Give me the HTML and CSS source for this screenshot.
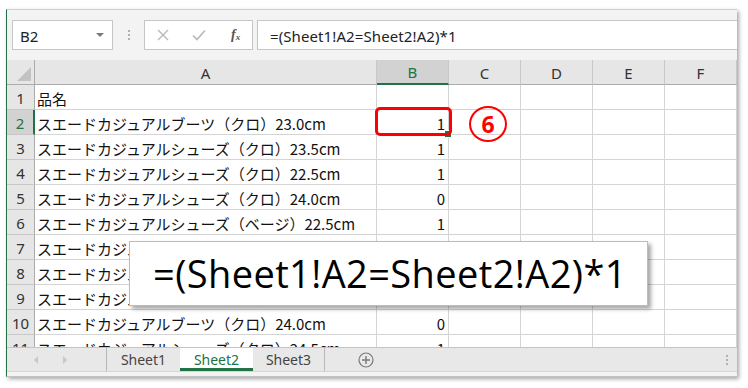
FILE: index.html
```html
<!DOCTYPE html>
<html lang="ja">
<head>
<meta charset="utf-8">
<title>Excel</title>
<link rel="stylesheet" href="styles.css">
</head>
<body>
<div class="window">
  <div class="fbar">
    <div class="namebox"><span>B2</span><span class="dd"></span></div>
    <div class="vdots"><i></i><i></i><i></i></div>
    <div class="btns">
      <svg class="ic" width="14" height="14" viewBox="0 0 14 14"><path d="M2 2L12 12M12 2L2 12" stroke="#b8b8b8" stroke-width="1.4" fill="none"/></svg>
      <svg class="ic" width="16" height="14" viewBox="0 0 16 14"><path d="M2 7.5L6 11.5L14 2.5" stroke="#b8b8b8" stroke-width="1.6" fill="none"/></svg>
      <span class="fx">f<sub>x</sub></span>
    </div>
    <div class="formula">=(Sheet1!A2=Sheet2!A2)*1</div>
  </div>
  <div class="gridwrap">
    <div class="grid">
      <div class="hd corner"><span class="tri"></span></div>
      <div class="hd">A</div>
      <div class="hd sel-col">B</div>
      <div class="hd">C</div>
      <div class="hd">D</div>
      <div class="hd">E</div>
      <div class="hd">F</div>

      <div class="rn">1</div><div class="c t">品名</div><div class="c n"></div><div class="c"></div><div class="c"></div><div class="c"></div><div class="c"></div>
      <div class="rn sel-row">2</div><div class="c t">スエードカジュアルブーツ（クロ）23.0cm</div><div class="c n active">1<span class="handle"></span></div><div class="c"></div><div class="c"></div><div class="c"></div><div class="c"></div>
      <div class="rn">3</div><div class="c t">スエードカジュアルシューズ（クロ）23.5cm</div><div class="c n">1</div><div class="c"></div><div class="c"></div><div class="c"></div><div class="c"></div>
      <div class="rn">4</div><div class="c t">スエードカジュアルシューズ（クロ）22.5cm</div><div class="c n">1</div><div class="c"></div><div class="c"></div><div class="c"></div><div class="c"></div>
      <div class="rn">5</div><div class="c t">スエードカジュアルシューズ（クロ）24.0cm</div><div class="c n">0</div><div class="c"></div><div class="c"></div><div class="c"></div><div class="c"></div>
      <div class="rn">6</div><div class="c t">スエードカジュアルシューズ（ベージ）22.5cm</div><div class="c n">1</div><div class="c"></div><div class="c"></div><div class="c"></div><div class="c"></div>
      <div class="rn">7</div><div class="c t">スエードカジュアルシューズ（ベージ）23.0cm</div><div class="c n">1</div><div class="c"></div><div class="c"></div><div class="c"></div><div class="c"></div>
      <div class="rn">8</div><div class="c t">スエードカジュアルシューズ（ベージ）23.5cm</div><div class="c n">1</div><div class="c"></div><div class="c"></div><div class="c"></div><div class="c"></div>
      <div class="rn">9</div><div class="c t">スエードカジュアルブーツ（クロ）23.5cm</div><div class="c n">1</div><div class="c"></div><div class="c"></div><div class="c"></div><div class="c"></div>
      <div class="rn">10</div><div class="c t">スエードカジュアルブーツ（クロ）24.0cm</div><div class="c n">0</div><div class="c"></div><div class="c"></div><div class="c"></div><div class="c"></div>
      <div class="rn">11</div><div class="c t">スエードカジュアルシューズ（クロ）24.5cm</div><div class="c n">1</div><div class="c"></div><div class="c"></div><div class="c"></div><div class="c"></div>
    </div>
  </div>
  <div class="tabs">
    <div class="nav">
      <svg width="8" height="10" viewBox="0 0 8 10"><path d="M6 1L2 5L6 9Z" fill="#c8c8c8"/></svg>
      <svg width="8" height="10" viewBox="0 0 8 10"><path d="M2 1L6 5L2 9Z" fill="#c8c8c8"/></svg>
    </div>
    <div class="tab">Sheet1</div>
    <div class="tab on">Sheet2</div>
    <div class="tab last">Sheet3</div>
    <div class="add">
      <svg width="16" height="16" viewBox="0 0 16 16"><circle cx="8" cy="8" r="7" stroke="#7a7a7a" stroke-width="1.2" fill="none"/><path d="M8 4V12M4 8H12" stroke="#7a7a7a" stroke-width="1.4"/></svg>
    </div>
    <div class="spacer"></div>
    <div class="rdots"><i></i><i></i><i></i></div>
  </div>
  <div class="strip"></div>
</div>

<div class="redbox"></div>
<div class="badge">6</div>
<div class="tip">=(Sheet1!A2=Sheet2!A2)*1</div>
</body>
</html>
```
FILE: styles.css
```css
html, body {
  margin: 0;
  padding: 0;
  background: #ffffff;
}
body {
  position: relative;
  width: 748px;
  height: 388px;
  overflow: hidden;
  font-family: "Noto Sans CJK JP", "Noto Sans", sans-serif;
}
.window {
  position: absolute;
  left: 6px;
  top: 9px;
  width: 731px;
  height: 368px;
  box-sizing: border-box;
  border-left: 1px solid #217346;
  border-top: 1px solid #d0d0d0;
  border-bottom: 1px solid #c4c4c4;
  background: #f3f3f3;
  box-shadow: 2px 2px 4px rgba(0, 0, 0, 0.35);
  display: flex;
  flex-direction: column;
}
.fbar {
  height: 50px;
  box-sizing: border-box;
  padding: 10px 0 10px 5px;
  display: flex;
  align-items: stretch;
  background: #f3f3f3;
}
.namebox {
  width: 101px;
  box-sizing: border-box;
  border: 1px solid #c6c6c6;
  background: #fff;
  display: flex;
  align-items: center;
  justify-content: space-between;
  padding: 2px 8px 0 7px;
  font-family: "Noto Sans", sans-serif;
  font-size: 15px;
  color: #222;
}
.dd {
  width: 0;
  height: 0;
  border-left: 4px solid transparent;
  border-right: 4px solid transparent;
  border-top: 4px solid #7a7a7a;
  margin-bottom: 2px;
}
.vdots {
  width: 31px;
  display: flex;
  flex-direction: column;
  align-items: center;
  justify-content: center;
  gap: 2px;
}
.vdots i, .rdots i {
  display: block;
  width: 2px;
  height: 2px;
  background: #b0b0b0;
}
.btns {
  width: 109px;
  box-sizing: border-box;
  border: 1px solid #c6c6c6;
  background: #fff;
  display: flex;
  align-items: center;
  padding: 0 0 0 11px;
  gap: 21px;
}
.fx {
  font-family: "Liberation Serif", serif;
  font-style: italic;
  font-size: 14px;
  color: #555;
  font-weight: bold;
  margin-left: 3px;
}
.fx sub {
  font-size: 9px;
  vertical-align: -1px;
}
.formula {
  flex: 1;
  margin-left: 4px;
  border: 1px solid #c6c6c6;
  border-right: none;
  background: #fff;
  display: flex;
  align-items: center;
  padding-left: 12px;
  padding-top: 1px;
  font-family: "Noto Sans", sans-serif;
  font-size: 15px;
  letter-spacing: 0.1px;
  color: #222;
}
.gridwrap {
  height: 287px;
  overflow: hidden;
  background: #fff;
}
.grid {
  display: grid;
  grid-template-columns: 28px 342px repeat(5, 72px);
  grid-auto-rows: 25px;
}
.grid > div {
  box-sizing: border-box;
  border-right: 1px solid #d4d4d4;
  border-bottom: 1px solid #d4d4d4;
  display: flex;
  align-items: center;
  white-space: nowrap;
  overflow: hidden;
}
.hd {
  background: #e6e6e6;
  justify-content: center;
  font-family: "Noto Sans", sans-serif;
  font-size: 15px;
  color: #333;
  border-bottom-color: #ababab !important;
  border-right-color: #c8c8c8 !important;
  padding-top: 1px;
}
.corner {
  position: relative;
  border-right-color: #ababab !important;
}
.tri {
  position: absolute;
  right: 3px;
  bottom: 3px;
  width: 0;
  height: 0;
  border-left: 14px solid transparent;
  border-bottom: 14px solid #c2c2c2;
}
.sel-col {
  background: #d2d2d2;
  color: #217346;
  border-bottom: 2px solid #217346 !important;
}
.rn {
  background: #e6e6e6;
  justify-content: center;
  font-family: "Noto Sans", sans-serif;
  font-size: 15px;
  color: #333;
  border-right-color: #ababab !important;
  border-bottom-color: #c8c8c8 !important;
  padding-top: 1px;
}
.sel-row {
  background: #d2d2d2;
  color: #217346;
  border-right: 2px solid #217346 !important;
}
.c {
  font-size: 15px;
  color: #111;
}
.t {
  padding-left: 2px;
  padding-top: 2px;
}
.n {
  justify-content: flex-end;
  padding-right: 3px;
  padding-top: 2px;
}
.active {
  position: relative;
  overflow: visible !important;
}
.handle {
  position: absolute;
  right: -4px;
  bottom: -4px;
  width: 6px;
  height: 6px;
  background: #217346;
  border: 1px solid #fff;
}
.tabs {
  height: 24px;
  box-sizing: border-box;
  border-top: 1px solid #c4c4c4;
  background: #e8e8e8;
  display: flex;
  align-items: stretch;
  font-family: "Noto Sans", sans-serif;
  font-size: 14px;
  color: #444;
}
.nav {
  width: 100px;
  box-sizing: border-box;
  display: flex;
  align-items: center;
  padding-left: 25px;
  gap: 21px;
  border-right: 1px solid #b8b8b8;
}
.tab {
  width: 73px;
  display: flex;
  align-items: center;
  justify-content: center;
  box-sizing: border-box;
}
.tab.on {
  background: #ffffff;
  color: #217346;
  border-bottom: 3px solid #217346;
  padding-top: 3px;
}
.tab.last {
  width: 72px;
  border-right: 1px solid #b8b8b8;
}
.add {
  width: 82px;
  display: flex;
  align-items: center;
  justify-content: center;
}
.spacer {
  flex: 1;
}
.rdots {
  width: 20px;
  display: flex;
  flex-direction: column;
  align-items: center;
  justify-content: center;
  gap: 2px;
}
.strip {
  flex: 1;
  border-top: 1px solid #d6d6d6;
  background: #f3f3f3;
}
.redbox {
  position: absolute;
  left: 375px;
  top: 107px;
  width: 77px;
  height: 29px;
  box-sizing: border-box;
  border: 3px solid #ff0000;
  border-radius: 5px;
}
.badge {
  position: absolute;
  left: 469px;
  top: 106px;
  width: 38px;
  height: 36px;
  box-sizing: border-box;
  border: 2.5px solid #ff0000;
  border-radius: 50%;
  display: flex;
  align-items: center;
  justify-content: center;
  color: #ff0000;
  font-family: "Noto Sans", sans-serif;
  font-weight: bold;
  font-size: 23px;
  line-height: 1;
}
.tip {
  position: absolute;
  left: 129px;
  top: 241px;
  width: 519px;
  height: 65px;
  box-sizing: border-box;
  border: 1px solid #bdbdbd;
  background: #ffffff;
  box-shadow: 3px 3px 4px rgba(0, 0, 0, 0.35);
  padding-left: 23px;
  padding-bottom: 2px;
  display: flex;
  align-items: center;
  font-family: "Open Sans", sans-serif;
  font-size: 38px;
  letter-spacing: 0.4px;
  color: #000;
  white-space: nowrap;
}
```
